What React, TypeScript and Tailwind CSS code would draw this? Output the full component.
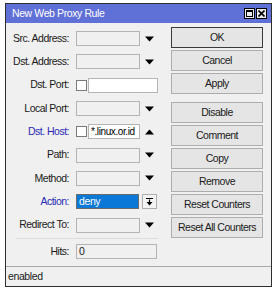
import React from "react"

const font = { fontFamily: '"Liberation Sans", Arial, sans-serif' }

function DownArrow({ up = false }: { up?: boolean }) {
  return (
    <svg width="9" height="6" viewBox="0 0 9 6" className="shrink-0">
      {up ? <path d="M0 5.5 L4.5 0.5 L9 5.5 Z" fill="#000" /> : <path d="M0 0.5 L9 0.5 L4.5 5.5 Z" fill="#000" />}
    </svg>
  )
}

function Field({ white = false, children, className = "" }: { white?: boolean; children?: React.ReactNode; className?: string }) {
  return (
    <div
      className={
        "h-[15px] border border-[#b4b4b4] flex items-center px-[2px] text-[10.5px] tracking-[-0.4px] leading-none whitespace-nowrap overflow-hidden " +
        (white ? "bg-white " : "bg-[#f0f0f0] ") +
        className
      }
    >
      {children}
    </div>
  )
}

function Check() {
  return <div className="w-[11px] h-[11px] border border-[#7a7a7a] bg-white shrink-0" />
}

function Label({ text, blue = false }: { text: string; blue?: boolean }) {
  return (
    <div
      className={
        "w-[64px] text-right text-[10.5px] tracking-[-0.5px] whitespace-nowrap pr-[1px] " +
        (blue ? "text-[#2a2ab4]" : "text-[#1a1a1a]")
      }
    >
      {text}
    </div>
  )
}

function Row({ label, blue = false, children }: { label: string; blue?: boolean; children: React.ReactNode }) {
  return (
    <div className="h-[23.3px] flex items-center">
      <Label text={label} blue={blue} />
      <div className="ml-[6px] flex items-center">{children}</div>
    </div>
  )
}

function Combo() {
  return (
    <>
      <Field className="w-[64px]" />
      <div className="w-[18px] flex justify-center">
        <DownArrow />
      </div>
    </>
  )
}

function Btn({ label, main = false }: { label: string; main?: boolean }) {
  return (
    <div
      className={
        "h-[21px] w-[92px] flex items-center justify-center bg-[#e5e5e5] text-[10.5px] tracking-[-0.5px] whitespace-nowrap text-[#1a1a1a] " +
        (main ? "border-[1.5px] border-[#3a3a3a]" : "border border-[#adadad]")
      }
    >
      {label}
    </div>
  )
}

export default function App() {
  return (
    <div className="w-[277px] h-[293px] bg-white pl-[5px] pt-[3px]" style={font}>
      <div className="w-[267px] h-[284px] border border-[#2e2e2e] flex flex-col bg-[#f0f0f0]">
        <div className="h-[19px] bg-[#5f70d6] flex items-center pl-[6px] pr-[4px]">
          <span className="text-white text-[10.5px] tracking-[-0.4px] whitespace-nowrap">New Web Proxy Rule</span>
          <div className="ml-auto flex gap-[1px]">
            <div className="w-[11px] h-[11px] bg-[#ececec] border border-black flex items-center justify-center">
              <div className="w-[7px] h-[7px] border border-black border-t-2" />
            </div>
            <div className="w-[11px] h-[11px] bg-[#ececec] border border-black flex items-center justify-center">
              <svg width="7" height="7" viewBox="0 0 7 7">
                <path d="M0.5 0.5 L6.5 6.5 M6.5 0.5 L0.5 6.5" stroke="#000" strokeWidth="1.6" />
              </svg>
            </div>
          </div>
        </div>

        <div className="flex-1 flex">
          <div className="w-[164px] flex flex-col pt-[4px]">
            <Row label="Src. Address:">
              <Combo />
            </Row>
            <Row label="Dst. Address:">
              <Combo />
            </Row>
            <Row label="Dst. Port:">
              <Check />
              <Field white className="w-[70px] ml-[1px]" />
            </Row>
            <Row label="Local Port:">
              <Combo />
            </Row>
            <Row label="Dst. Host:" blue>
              <Check />
              <Field white className="w-[52px] ml-[1px]">
                <span className="text-[10px]">*.linux.or.id</span>
              </Field>
              <div className="w-[18px] flex justify-center">
                <DownArrow up />
              </div>
            </Row>
            <Row label="Path:">
              <Combo />
            </Row>
            <Row label="Method:">
              <Combo />
            </Row>
            <Row label="Action:" blue>
              <Field className="w-[63px] !bg-[#0a78d7] !border-[#6a6a6a] text-white">deny</Field>
              <div className="ml-[3px] w-[15px] h-[15px] border border-[#adadad] bg-[#f4f4f4] flex items-center justify-center">
                <svg width="7" height="8" viewBox="0 0 7 8">
                  <path d="M0 0.5 H7" stroke="#000" strokeWidth="1" />
                  <path d="M3.5 1.5 V5" stroke="#000" strokeWidth="1.2" />
                  <path d="M0.5 4 L6.5 4 L3.5 7.5 Z" fill="#000" />
                </svg>
              </div>
            </Row>
            <Row label="Redirect To:">
              <Combo />
            </Row>
            <div className="ml-[10px] w-[142px] border-t border-[#dcdcdc] mt-[1px]" />
            <div className="h-[20px] flex items-center mt-[3px]">
              <Label text="Hits:" />
              <Field className="ml-[6px] w-[81px] text-[#1a1a1a]">0</Field>
            </div>
          </div>

          <div className="flex flex-col pt-[4px] ml-[1px]">
            <div className="flex flex-col gap-[2px]">
              <Btn label="OK" main />
              <Btn label="Cancel" />
              <Btn label="Apply" />
            </div>
            <div className="flex flex-col gap-[2px] mt-[8px]">
              <Btn label="Disable" />
              <Btn label="Comment" />
              <Btn label="Copy" />
              <Btn label="Remove" />
              <Btn label="Reset Counters" />
              <Btn label="Reset All Counters" />
            </div>
          </div>
        </div>

        <div className="h-[20px] border-t border-[#a8a8a8] flex items-center pl-[2px] text-[10.5px] tracking-[-0.4px] text-[#1a1a1a]">
          enabled
        </div>
      </div>
    </div>
  )
}
